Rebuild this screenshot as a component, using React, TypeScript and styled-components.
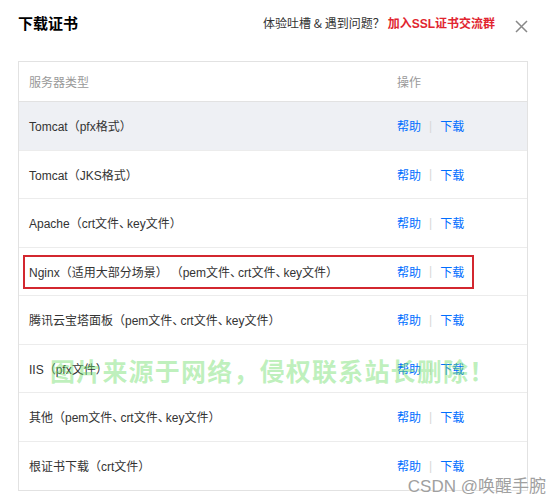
import React from "react";
import styled, { createGlobalStyle } from "styled-components";

const Global = createGlobalStyle`
  html, body { margin: 0; padding: 0; background: #fff; }
  body { font-family: "Liberation Sans", "Noto Sans CJK SC", sans-serif; color: #333; }
`;

const Page = styled.div`
  position: relative;
  width: 548px;
  height: 500px;
  overflow: hidden;
  box-sizing: border-box;
  padding: 0 20px 0 18px;
`;

const Header = styled.div`
  height: 44px;
  display: flex;
  align-items: center;
  justify-content: space-between;
`;

const Title = styled.h2`
  margin: 0;
  font-size: 15px;
  font-weight: 700;
  color: #000;
  font-family: "Noto Sans CJK SC", sans-serif;
`;

const HeaderRight = styled.div`
  display: flex;
  align-items: center;
  gap: 20px;
`;

const Feedback = styled.div`
  font-size: 12px;
  color: #333;
  font-family: "Noto Sans CJK SC", sans-serif;
  display: flex;
  gap: 3px;
`;

const JoinLink = styled.a`
  color: #e1252f;
  font-weight: 700;
  text-decoration: none;
  font-family: "Liberation Sans", "Noto Sans CJK SC", sans-serif;
`;

const CloseBtn = styled.button`
  border: 0;
  background: none;
  padding: 0;
  margin-top: 9px;
  width: 13px;
  height: 13px;
  display: flex;
  cursor: pointer;
`;

const Table = styled.div`
  margin-top: 17px;
  border: 1px solid #e2e2e2;
`;

const Row = styled.div<{ $head?: boolean; $active?: boolean }>`
  position: relative;
  display: grid;
  grid-template-columns: 1fr 130px;
  align-items: center;
  padding-left: 10px;
  box-sizing: border-box;
  height: ${(p) => (p.$head ? "40px" : "48.5px")};
  border-bottom: 1px solid ${(p) => (p.$head ? "#e2e2e2" : "#ececec")};
  background: ${(p) => (p.$active ? "#eef0f4" : "#fff")};
  font-size: 12px;
  color: ${(p) => (p.$head ? "#999" : "#333")};
  text-spacing-trim: space-all;
  &:last-child { border-bottom: 0; }
`;

const Comma = styled.span`
  font-family: "Noto Sans CJK SC", sans-serif;
  font-feature-settings: "halt";
  margin-right: 2px;
`;

const Gap = styled.span`
  display: inline-block;
  width: 3px;
`;

const Actions = styled.div`
  display: flex;
  align-items: center;
  color: #006eff;
`;

const ActionLink = styled.a`
  color: #006eff;
  text-decoration: none;
  font-family: "Noto Sans CJK SC", sans-serif;
`;

const Sep = styled.span`
  color: #d8d8d8;
  margin: 0 8px;
`;

const Highlight = styled.div`
  position: absolute;
  left: 4px;
  top: 7px;
  width: 451px;
  height: 34px;
  box-sizing: border-box;
  border: 2px solid #d3272f;
  pointer-events: none;
`;

const Watermark = styled.div`
  position: absolute;
  left: 50px;
  top: 352px;
  font-size: 25px;
  font-weight: 700;
  letter-spacing: 1.2px;
  color: rgba(110, 222, 105, 0.45);
  font-family: "Noto Sans CJK SC", sans-serif;
  white-space: nowrap;
  pointer-events: none;
`;

const Credit = styled.div`
  position: absolute;
  right: 2px;
  bottom: 3px;
  font-size: 17px;
  color: #a0a0a0;
  font-family: "Liberation Sans", "Noto Sans CJK SC", sans-serif;
  white-space: nowrap;
  text-shadow: 0 0 2px #fff;
`;

const rows = [
  "Tomcat（pfx格式）",
  "Tomcat（JKS格式）",
  "Apache（crt文件、key文件）",
  "Nginx（适用大部分场景）|（pem文件、crt文件、key文件）",
  "腾讯云宝塔面板（pem文件、crt文件、key文件）",
  "IIS（pfx文件）",
  "其他（pem文件、crt文件、key文件）",
  "根证书下载（crt文件）",
];

function Label({ text }: { text: string }) {
  const parts = text.split(/(、|\|)/);
  return (
    <span>
      {parts.map((p, i) =>
        p === "、" ? <Comma key={i}>、</Comma> : p === "|" ? <Gap key={i} /> : <React.Fragment key={i}>{p}</React.Fragment>
      )}
    </span>
  );
}

export default function App() {
  return (
    <>
      <Global />
      <Page>
        <Header>
          <Title>下载证书</Title>
          <HeaderRight>
            <Feedback>
              <span>体验吐槽 &amp; 遇到问题？</span>
              <JoinLink href="#">加入SSL证书交流群</JoinLink>
            </Feedback>
            <CloseBtn aria-label="关闭">
              <svg width="13" height="13" viewBox="0 0 13 13">
                <path d="M1 1L12 12M12 1L1 12" stroke="#888" strokeWidth="1.5" fill="none" />
              </svg>
            </CloseBtn>
          </HeaderRight>
        </Header>
        <Table>
          <Row $head>
            <span>服务器类型</span>
            <span>操作</span>
          </Row>
          {rows.map((r, i) => (
            <Row key={r} $active={i === 0}>
              <Label text={r} />
              <Actions>
                <ActionLink href="#">帮助</ActionLink>
                <Sep>|</Sep>
                <ActionLink href="#">下载</ActionLink>
              </Actions>
              {i === 3 && <Highlight />}
            </Row>
          ))}
        </Table>
        <Watermark>图片来源于网络，侵权联系站长删除！</Watermark>
        <Credit>CSDN @唤醒手腕</Credit>
      </Page>
    </>
  );
}
